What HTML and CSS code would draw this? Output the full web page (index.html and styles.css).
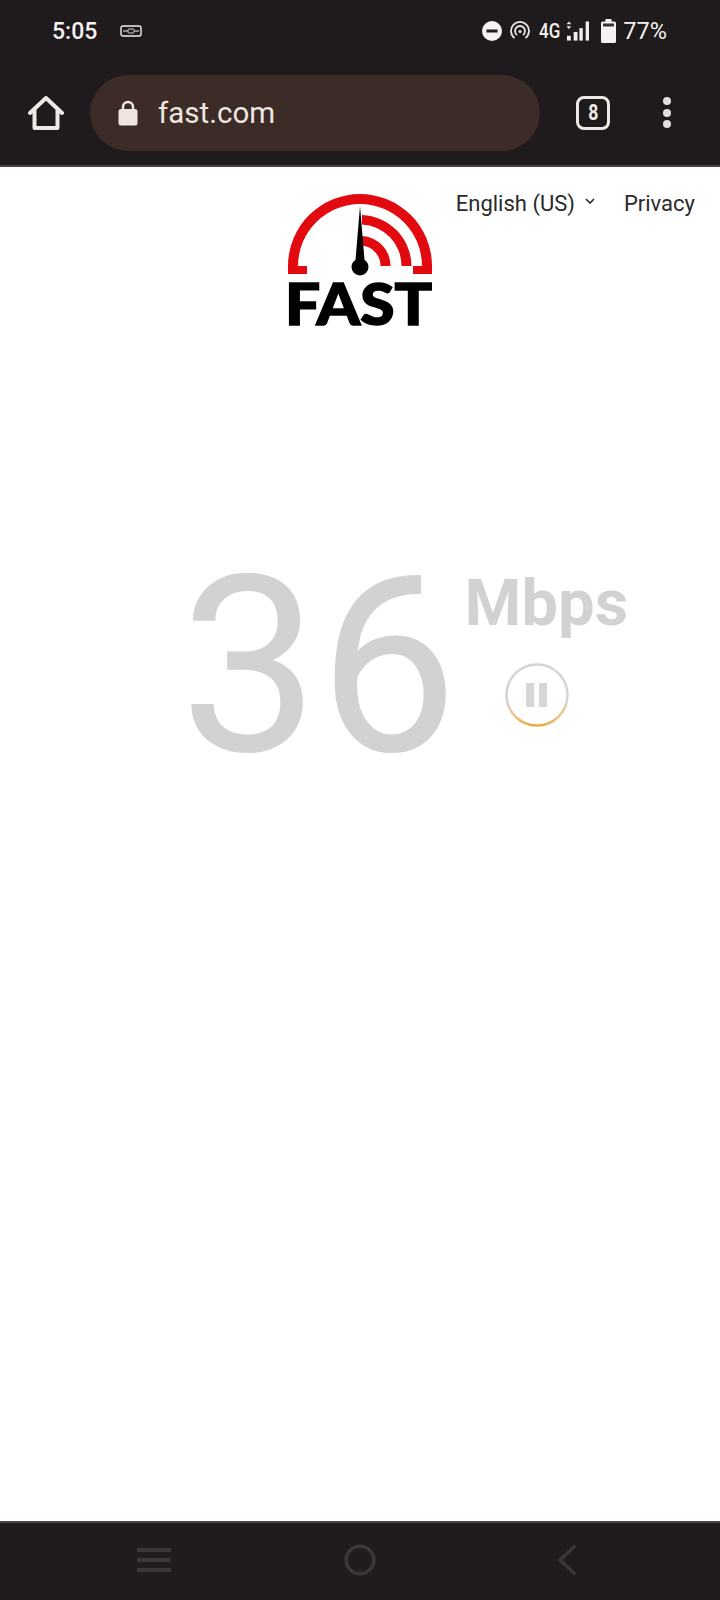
FILE: index.html
```html
<!DOCTYPE html>
<html lang="en">
<head>
<meta charset="utf-8">
<title>Fast.com</title>
<link rel="stylesheet" href="styles.css">
</head>
<body>
<div class="page">
  <header class="chrome">
    <div class="status">
      <div class="status-left">
        <span class="time">5:05</span>
        <svg class="ic-vpn" viewBox="0 0 22 12"><rect x="1" y="1" width="20" height="10" rx="2" fill="none" stroke="#eee" stroke-width="1.4"/><path d="M3 6h5M14 6h5" stroke="#eee" stroke-width="1.2"/><rect x="8" y="4" width="6" height="4" rx="1" fill="none" stroke="#ccc" stroke-width="1"/></svg>
      </div>
      <div class="status-right">
        <svg class="ic-dnd" viewBox="0 0 20 20"><circle cx="10" cy="10" r="10" fill="#f4f1f0"/><rect x="4.5" y="8.5" width="11" height="3" fill="#1f1a1b"/></svg>
        <svg class="ic-hot" viewBox="0 0 20 20" fill="none" stroke="#e8e5e4" stroke-width="1.8"><path d="M4.5 17A9 9 0 1 1 15.500 17"/><path d="M7 14A5 5 0 1 1 13 14"/><circle cx="10" cy="10.500" r="1.600" fill="#e8e5e4" stroke="none"/></svg>
        <span class="net">4G</span>
        <svg class="ic-sig" viewBox="0 0 24 20" fill="#f0eded"><path d="M2 0l2.500 3h-5zM2 8L-.5 5h5z" transform="translate(1 0)"/><rect x="1" y="15" width="4" height="5"/><rect x="8" y="11" width="4" height="9"/><rect x="14" y="7" width="3.500" height="13" /><rect x="20.500" y="0" width="3.500" height="20"/></svg>
        <svg class="ic-bat" viewBox="0 0 15 24"><path d="M4.500 0h6v2.500h3a1.500 1.500 0 0 1 1.500 1.500v18.500a1.500 1.500 0 0 1-1.500 1.500h-12A1.500 1.500 0 0 1 0 22.500V4a1.500 1.500 0 0 1 1.500-1.500h3z" fill="#f4f1f0"/><rect x="2" y="4.500" width="11" height="3" fill="#3a3535"/></svg>
        <span class="pct">77%</span>
      </div>
    </div>
    <div class="toolbar">
      <svg class="ic-home" viewBox="0 0 36 34" fill="none" stroke="#efe9e6" stroke-width="4" stroke-linejoin="round" stroke-linecap="round"><path d="M2 17L18 2l16 15"/><path d="M6.500 14v18h23V14"/></svg>
      <div class="omnibox">
        <svg class="ic-lock" viewBox="0 0 20 26"><path d="M5 11V7a5 5 0 0 1 10 0v4" fill="none" stroke="#efe6e2" stroke-width="2.400"/><rect x="0.500" y="9" width="19" height="16.500" rx="2.500" fill="#efe6e2"/></svg>
        <span class="url">fast.com</span>
      </div>
      <div class="tabs"><span class="tab-count">8</span></div>
      <div class="dots"><i></i><i></i><i></i></div>
    </div>
  </header>

  <main class="content">
    <nav class="links">
      <span class="lang">English (US)</span>
      <svg class="ic-chev" viewBox="0 0 10 7" fill="none" stroke="#2a2a2a" stroke-width="1.600"><path d="M1 1l4 4 4-4"/></svg>
      <span class="privacy">Privacy</span>
    </nav>
    <svg class="logo" viewBox="0 0 144 146" role="img" aria-label="Fast">
      <path d="M0 80V72A72 72 0 0 1 144 72V80H125V72H134A62 62 0 0 0 10 72H19V80Z" fill="#e2090f"/>
      <path d="M74 21A51.500 51.500 0 0 1 123.500 72H113.500A41.500 41.500 0 0 0 74 30.500Z" fill="#e2090f"/>
      <path d="M74 42A30 30 0 0 1 102.500 72H92.500A20.500 20.500 0 0 0 74 51.500Z" fill="#e2090f"/>
      <path d="M72 12L76.500 66H67.500Z" fill="#000"/>
      <circle cx="72" cy="73" r="8.500" fill="#000"/>
      <text class="logo-text" x="-3" y="131" textLength="147" lengthAdjust="spacingAndGlyphs">FAST</text>
    </svg>
    <div class="speed">
      <span class="value">36</span>
      <div class="side">
        <span class="units">Mbps</span>
        <svg class="pause" viewBox="0 0 66 66">
          <defs>
            <linearGradient id="ring" x1="0" y1="0" x2="0" y2="1">
              <stop offset="0.55" stop-color="#d4d4d4"/>
              <stop offset="0.85" stop-color="#efc384"/>
              <stop offset="1" stop-color="#eba945"/>
            </linearGradient>
          </defs>
          <circle cx="33" cy="33" r="30.500" fill="none" stroke="url(#ring)" stroke-width="2.500"/>
          <rect x="22" y="21" width="8" height="24" fill="#d6d6d6"/>
          <rect x="35" y="21" width="8" height="24" fill="#d6d6d6"/>
        </svg>
      </div>
    </div>
  </main>

  <footer class="navbar">
    <svg class="ic-menu" viewBox="0 0 34 26" fill="#3b3738"><rect width="34" height="4" y="1" rx="1"/><rect width="34" height="4" y="11" rx="1"/><rect width="34" height="4" y="21" rx="1"/></svg>
    <svg class="ic-circle" viewBox="0 0 32 32" fill="none" stroke="#3b3738" stroke-width="3.600"><circle cx="16" cy="16" r="13.800"/></svg>
    <svg class="ic-back" viewBox="0 0 20 32" fill="none" stroke="#3b3738" stroke-width="3.400"><path d="M18.500 1.500L3 16l15.500 14.500"/></svg>
  </footer>
</div>
</body>
</html>
```
FILE: styles.css
```css
* { box-sizing: border-box; }
html, body { margin: 0; padding: 0; background: #fff; }
svg { display: block; flex: none; }
.page {
  width: 720px;
  height: 1600px;
  display: flex;
  flex-direction: column;
  overflow: hidden;
  font-family: Roboto, "Liberation Sans", sans-serif;
}
.chrome {
  height: 167px;
  background: #1f1a1b;
  border-bottom: 2px solid #4b3f37;
  flex: none;
}
.status {
  height: 60px;
  padding: 2px 53px 0 52px;
  display: flex;
  align-items: center;
  justify-content: space-between;
  color: #f4f1f0;
}
.status-left { display: flex; align-items: center; gap: 24px; }
.status-right { display: flex; align-items: center; }
.time { font-size: 23px; font-weight: 500; width: 44px; }
.ic-vpn { width: 22px; height: 12px; }
.ic-dnd { width: 20px; height: 20px; margin-right: 8px; }
.ic-hot { width: 20px; height: 20px; margin-right: 9px; }
.net { font-size: 20px; font-weight: 500; margin-right: 6px; transform: scaleX(.85); transform-origin: left; width: 21px; }
.ic-sig { width: 23px; height: 20px; margin-right: 12px; }
.ic-bat { width: 15px; height: 24px; margin-right: 7px; }
.pct { font-size: 23.500px; font-weight: 400; }
.toolbar {
  height: 105px;
  display: flex;
  align-items: center;
  padding: 0 0 0 28px;
}
.ic-home { width: 36px; height: 34px; margin-right: 26px; }
.omnibox {
  width: 450px;
  height: 76px;
  border-radius: 38px;
  background: #3c2b27;
  display: flex;
  align-items: center;
  padding-left: 28px;
  margin-right: 36px;
}
.ic-lock { width: 20px; height: 26px; margin-right: 20px; }
.url { font-size: 29.500px; color: #eee5e1; }
.tabs {
  width: 34px;
  height: 34px;
  border: 3.500px solid #efe9e6;
  border-radius: 8px;
  color: #efe9e6;
  display: flex;
  align-items: center;
  justify-content: center;
  margin-right: 53px;
}
.tab-count { font-size: 22px; font-weight: 700; transform: scaleX(.8); }
.dots { display: flex; flex-direction: column; gap: 3.500px; }
.dots i { display: block; width: 8px; height: 8px; border-radius: 50%; background: #e3dedc; }
.content {
  flex: 1;
  position: relative;
  background: #fff;
  display: flex;
  flex-direction: column;
  align-items: center;
}
.links {
  position: absolute;
  top: 24px;
  right: 25px;
  display: flex;
  align-items: center;
  font-size: 22px;
  color: #2a2a2a;
}
.ic-chev { width: 10px; height: 7px; margin: -4px 29px 0 10px; }
.logo { width: 144px; height: 146px; margin: 27px 0 0; overflow: visible; }
.logo-text { font-family: Lato, "Liberation Sans", sans-serif; font-weight: 900; font-size: 57px; fill: #000; stroke: #000; stroke-width: 1.500px; }
.speed {
  margin-top: 217px;
  display: flex;
  align-items: flex-start;
  color: #d2d2d2;
  padding-left: 88px;
}
.value { font-size: 247px; font-weight: 400; line-height: 220px; }
.side { display: flex; flex-direction: column; align-items: center; margin-left: 7px; }
.units { font-size: 65px; font-weight: 700; line-height: 80px; margin-top: 6px; }
.pause { width: 66px; height: 66px; margin: 19px 18px 0 0; }
.navbar {
  height: 79px;
  flex: none;
  background: #201b1c;
  border-top: 2px solid #4a4748;
  display: flex;
  align-items: center;
  padding: 0 143px 4px 137px;
  justify-content: space-between;
}
.ic-menu { width: 34px; height: 26px; }
.ic-circle { width: 32px; height: 32px; margin-right: 8px; }
.ic-back { width: 20px; height: 32px; }
```
